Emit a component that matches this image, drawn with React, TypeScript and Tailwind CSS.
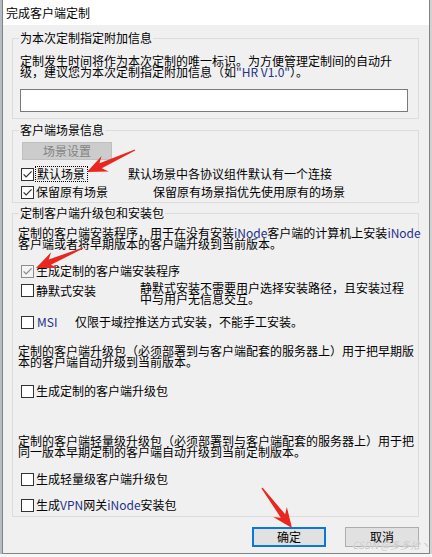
import clsx from "clsx";

function Box({ checked, dim }: { checked?: boolean; dim?: boolean }) {
  return (
    <span
      className={clsx(
        "flex h-[13px] w-[13px] shrink-0 items-center justify-center border",
        dim ? "border-[#8c8c8c] bg-[#f4f4f4]" : "border-[#333333] bg-white"
      )}
    >
      {checked && (
        <svg width="11" height="11" viewBox="0 0 11 11">
          <path d="M1.6 5.4 L4.1 7.9 L9.6 2.4" fill="none" stroke={dim ? "#8a8a8a" : "#333333"} strokeWidth="1.25" />
        </svg>
      )}
    </span>
  );
}

const En = ({ children }: { children: React.ReactNode }) => <span className="text-[#24308a]">{children}</span>;

function arrow(tx: number, ty: number, hx: number, hy: number) {
  const dx = hx - tx;
  const dy = hy - ty;
  const len = Math.hypot(dx, dy);
  const ux = dx / len;
  const uy = dy / len;
  const nx = -uy;
  const ny = ux;
  const H = 20;
  const W = 8.5;
  const neck = 15;
  const p = (x: number, y: number) => `${x.toFixed(1)},${y.toFixed(1)}`;
  return [
    p(tx + nx * 0.6, ty + ny * 0.6),
    p(hx - ux * neck + nx * 2.8, hy - uy * neck + ny * 2.8),
    p(hx - ux * H + nx * W, hy - uy * H + ny * W),
    p(hx, hy),
    p(hx - ux * H - nx * W, hy - uy * H - ny * W),
    p(hx - ux * neck - nx * 2.8, hy - uy * neck - ny * 2.8),
    p(tx - nx * 0.6, ty - ny * 0.6),
  ].join(" ");
}

const Legend = ({ children }: { children: React.ReactNode }) => (
  <span className="absolute -top-[8px] left-[6px] bg-[#f0f0f0] px-[1px] leading-[14px]">{children}</span>
);

export default function App() {
  return (
    <div className="relative flex h-[557px] w-[432px] overflow-hidden bg-[#f6f6f6] font-['Noto_Sans_CJK_SC',sans-serif] text-[12px] text-black">
      <div className="h-[554px] w-[2px] bg-[#b4bcc4]" />

      <div className="flex h-[554px] w-[428px] flex-col border border-t-0 border-[#838383] bg-[#f0f0f0]">
        <div className="h-[25px] bg-white pl-[3px] leading-[25px]">完成客户端定制</div>

        {/* 附加信息 */}
        <div className="relative ml-[9px] mt-[13px] w-[407px] border border-[#dcdcdc] pb-[6px] pl-[7px] pt-[16px]">
          <Legend>为本次定制指定附加信息</Legend>
          <p className="whitespace-nowrap leading-[11px]">
            定制发生时间将作为本次定制的唯一标识。为方便管理定制间的自动升
            <br />
            级，建议您为本次定制指定附加信息（如<En>"HR V1.0"</En>）。
          </p>
          <input readOnly className="mt-[12px] block h-[23px] w-[388px] border border-[#7a7a7a] bg-white outline-none" />
        </div>

        {/* 场景 */}
        <div className="relative ml-[9px] mt-[11px] w-[407px] border border-[#dcdcdc] pb-[2px] pl-[8px] pt-[11px]">
          <Legend>客户端场景信息</Legend>
          <div className="ml-[1px] flex h-[18px] w-[90px] items-center justify-center border border-[#bfbfbf] bg-[#cccccc] text-[#838383]">
            场景设置
          </div>
          <div className="mt-[6px] flex h-[16px] items-center">
            <div className="flex w-[107px] items-center">
              <Box checked />
              <span className="ml-[1px] border border-dotted border-black pl-[1px] pr-[2px] leading-[14px]">默认场景</span>
            </div>
            <span className="whitespace-nowrap">默认场景中各协议组件默认有一个连接</span>
          </div>
          <div className="mt-[2px] flex h-[16px] items-center">
            <div className="flex w-[132px] items-center">
              <Box checked />
              <span className="ml-[2px]">保留原有场景</span>
            </div>
            <span className="whitespace-nowrap">保留原有场景指优先使用原有的场景</span>
          </div>
        </div>

        {/* 升级包和安装包 */}
        <div className="relative ml-[9px] mt-[10px] w-[407px] border border-[#dcdcdc] pb-[3px] pl-[5px] pt-[13px]">
          <Legend>定制客户端升级包和安装包</Legend>
          <p className="whitespace-nowrap leading-[11px]">
            定制的客户端安装程序，用于在没有安装<En>iNode</En>客户端的计算机上安装<En>iNode</En>
            <br />
            客户端或者将早期版本的客户端升级到当前版本。
          </p>
          <div className="ml-[3px] mt-[14px] flex h-[16px] items-center">
            <Box checked dim />
            <span className="ml-[2px]">生成定制的客户端安装程序</span>
          </div>
          <div className="ml-[3px] mt-[3px] flex items-start">
            <div className="flex h-[17px] w-[119px] items-center">
              <Box />
              <span className="ml-[2px]">静默式安装</span>
            </div>
            <p className="whitespace-nowrap leading-[11px]">
              静默式安装不需要用户选择安装路径，且安装过程
              <br />
              中与用户无信息交互。
            </p>
          </div>
          <div className="ml-[3px] mt-[10px] flex h-[16px] items-center">
            <div className="flex w-[54px] items-center">
              <Box />
              <span className="ml-[3px]">
                <En>MSI</En>
              </span>
            </div>
            <span className="whitespace-nowrap">仅限于域控推送方式安装，不能手工安装。</span>
          </div>
          <p className="mt-[15px] whitespace-nowrap leading-[11px]">
            定制的客户端升级包（必须部署到与客户端配套的服务器上）用于把早期版
            <br />
            本的客户端自动升级到当前版本。
          </p>
          <div className="ml-[3px] mt-[16px] flex h-[16px] items-center">
            <Box />
            <span className="ml-[2px]">生成定制的客户端升级包</span>
          </div>
          <p className="mt-[36px] whitespace-nowrap leading-[11px]">
            定制的客户端轻量级升级包（必须部署到与客户端配套的服务器上）用于把
            <br />
            同一版本早期定制的客户端自动升级到当前定制版本。
          </p>
          <div className="ml-[3px] mt-[14px] flex h-[16px] items-center">
            <Box />
            <span className="ml-[2px]">生成轻量级客户端升级包</span>
          </div>
          <div className="ml-[3px] mt-[10px] flex h-[16px] items-center">
            <Box />
            <span className="ml-[2px]">
              生成<En>VPN</En>网关<En>iNode</En>安装包
            </span>
          </div>
        </div>

        <div className="mt-[10px] flex justify-end gap-[19px] pr-[10px]">
          <button className="flex h-[20px] w-[74px] items-center justify-center border-2 border-[#0a78d6] bg-[#e1e1e1] leading-[12px]">确定</button>
          <button className="flex h-[20px] w-[74px] items-center justify-center border border-[#adadad] bg-[#e1e1e1] leading-[12px]">取消</button>
        </div>
      </div>

      <div className="h-[554px] flex-1 bg-[#d2d2d2]" />

      <span className="pointer-events-none absolute left-[352px] top-[540px] whitespace-nowrap text-[10px] italic leading-[10px] text-[#c4c4c4] [text-shadow:0_0_1px_#ffffff]">
        CSDN @多多拾丶
      </span>

      <svg className="pointer-events-none absolute left-0 top-0" width="432" height="557">
        <polygon points={arrow(135, 150, 87, 172)} fill="#e8281e" />
        <polygon points={arrow(83, 248, 36, 268)} fill="#e8281e" />
        <polygon points={arrow(262, 488, 292, 528)} fill="#e8281e" />
      </svg>
    </div>
  );
}
